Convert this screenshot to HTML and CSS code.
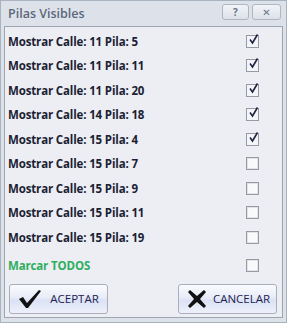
FILE: index.html
```html
<!DOCTYPE html>
<html>
<head>
<meta charset="utf-8">
<link rel="stylesheet" href="styles.css">
</head>
<body>
<div class="window">
  <div class="titlebar">
    <span class="title">Pilas Visibles</span>
    <div class="tbtns">
      <span class="tbtn">?</span>
      <span class="tbtn close">✕</span>
    </div>
  </div>
  <div class="content">
    <div class="row"><span>Mostrar Calle: 11 Pila: 5</span><span class="cb on"><svg viewBox="0 0 13 13"><path d="M3 6.5 L5.5 10 L10.5 1.5" /></svg></span></div>
    <div class="row"><span>Mostrar Calle: 11 Pila: 11</span><span class="cb on"><svg viewBox="0 0 13 13"><path d="M3 6.5 L5.5 10 L10.5 1.5" /></svg></span></div>
    <div class="row"><span>Mostrar Calle: 11 Pila: 20</span><span class="cb on"><svg viewBox="0 0 13 13"><path d="M3 6.5 L5.5 10 L10.5 1.5" /></svg></span></div>
    <div class="row"><span>Mostrar Calle: 14 Pila: 18</span><span class="cb on"><svg viewBox="0 0 13 13"><path d="M3 6.5 L5.5 10 L10.5 1.5" /></svg></span></div>
    <div class="row"><span>Mostrar Calle: 15 Pila: 4</span><span class="cb on"><svg viewBox="0 0 13 13"><path d="M3 6.5 L5.5 10 L10.5 1.5" /></svg></span></div>
    <div class="row"><span>Mostrar Calle: 15 Pila: 7</span><span class="cb"></span></div>
    <div class="row"><span>Mostrar Calle: 15 Pila: 9</span><span class="cb"></span></div>
    <div class="row"><span>Mostrar Calle: 15 Pila: 11</span><span class="cb"></span></div>
    <div class="row"><span>Mostrar Calle: 15 Pila: 19</span><span class="cb"></span></div>
    <div class="row all"><span>Marcar TODOS</span><span class="cb"></span></div>
    <div class="buttons">
      <button class="btn"><svg class="ico" viewBox="0 0 24 20"><path d="M1 10 L5 8 L9 14 L21 1 L23 2 L10 19 L8 19 Z"/></svg><span>ACEPTAR</span></button>
      <button class="btn"><svg class="ico" viewBox="0 0 20 20"><path d="M3 1 L10 7 L17 1 L19 3 L13 10 L19 17 L17 19 L10 13 L3 19 L1 17 L7 10 L1 3 Z"/></svg><span>CANCELAR</span></button>
    </div>
  </div>
</div>
</body>
</html>
```
FILE: styles.css
```css
* { box-sizing: border-box; }
html, body { margin: 0; padding: 0; }
body { width: 287px; height: 323px; overflow: hidden; font-family: "Open Sans", "DejaVu Sans", sans-serif; }
.window {
  width: 287px; height: 323px;
  background: #dde2ea;
  border: 1px solid #a9b2bf;
  display: flex; flex-direction: column;
}
.titlebar {
  height: 25px; flex: none;
  display: flex; align-items: center; justify-content: space-between;
  padding: 0 5px 0 7px;
}
.title { font-size: 12.5px; font-weight: 600; color: #5b677a; }
.tbtns { display: flex; gap: 3px; margin-top: -3px; }
.tbtn {
  width: 27px; height: 16px;
  border: 1px solid #aeb6c2; border-radius: 3px;
  background: linear-gradient(#f1f3f7, #dde2ea);
  font-size: 10px; font-weight: 700; color: #6b7585;
  display: flex; align-items: center; justify-content: center;
  line-height: 1;
}
.tbtn.close { width: 29px; font-size: 10px; }
.content {
  flex: 1;
  margin: 0 3px 4px 3px;
  border: 1px solid #9ca5b2;
  background: #eceef3;
  padding: 2px 0 0 3px;
  display: flex; flex-direction: column;
}
.row {
  height: 24.5px; flex: none;
  display: flex; align-items: center; justify-content: space-between;
  padding-right: 23px;
  font-size: 11.5px; font-weight: 700; color: #1c1e33;
  letter-spacing: -0.15px;
}
.row.all { color: #2fae5f; height: 28px; padding-top: 3px; }
.cb {
  width: 13px; height: 13px;
  border: 1px solid #979aa3;
  background: #f8f9fb;
  position: relative;
  box-shadow: inset 0 0 0 1px #e1e3e8, inset 0 0 0 2px #fbfbfc;
}
.cb.on { background: #f4f5f8; box-shadow: none; }
.cb svg { position: absolute; left: 0; top: -3px; width: 13px; height: 13px; overflow: visible; }
.cb svg path { fill: none; stroke: #1f2240; stroke-width: 1.6; }
.buttons {
  display: flex; justify-content: space-between;
  padding: 6px 5px 0 1px;
}
.btn {
  width: 99px; height: 30px;
  border: 1px solid #a9aebb; border-radius: 3px;
  background: linear-gradient(#fafbfe 0%, #e8ecf8 45%, #dbe2f5 55%, #eef1fb 100%);
  display: flex; align-items: center; padding: 0 0 0 8px; gap: 0;
  font-family: "Open Sans", sans-serif; font-size: 11.5px; color: #1c2350;
}
.btn span { flex: 1; text-align: center; }
.btn .ico { width: 24px; height: 20px; fill: #111; }
.btn:last-child .ico { width: 20px; height: 20px; }
```
